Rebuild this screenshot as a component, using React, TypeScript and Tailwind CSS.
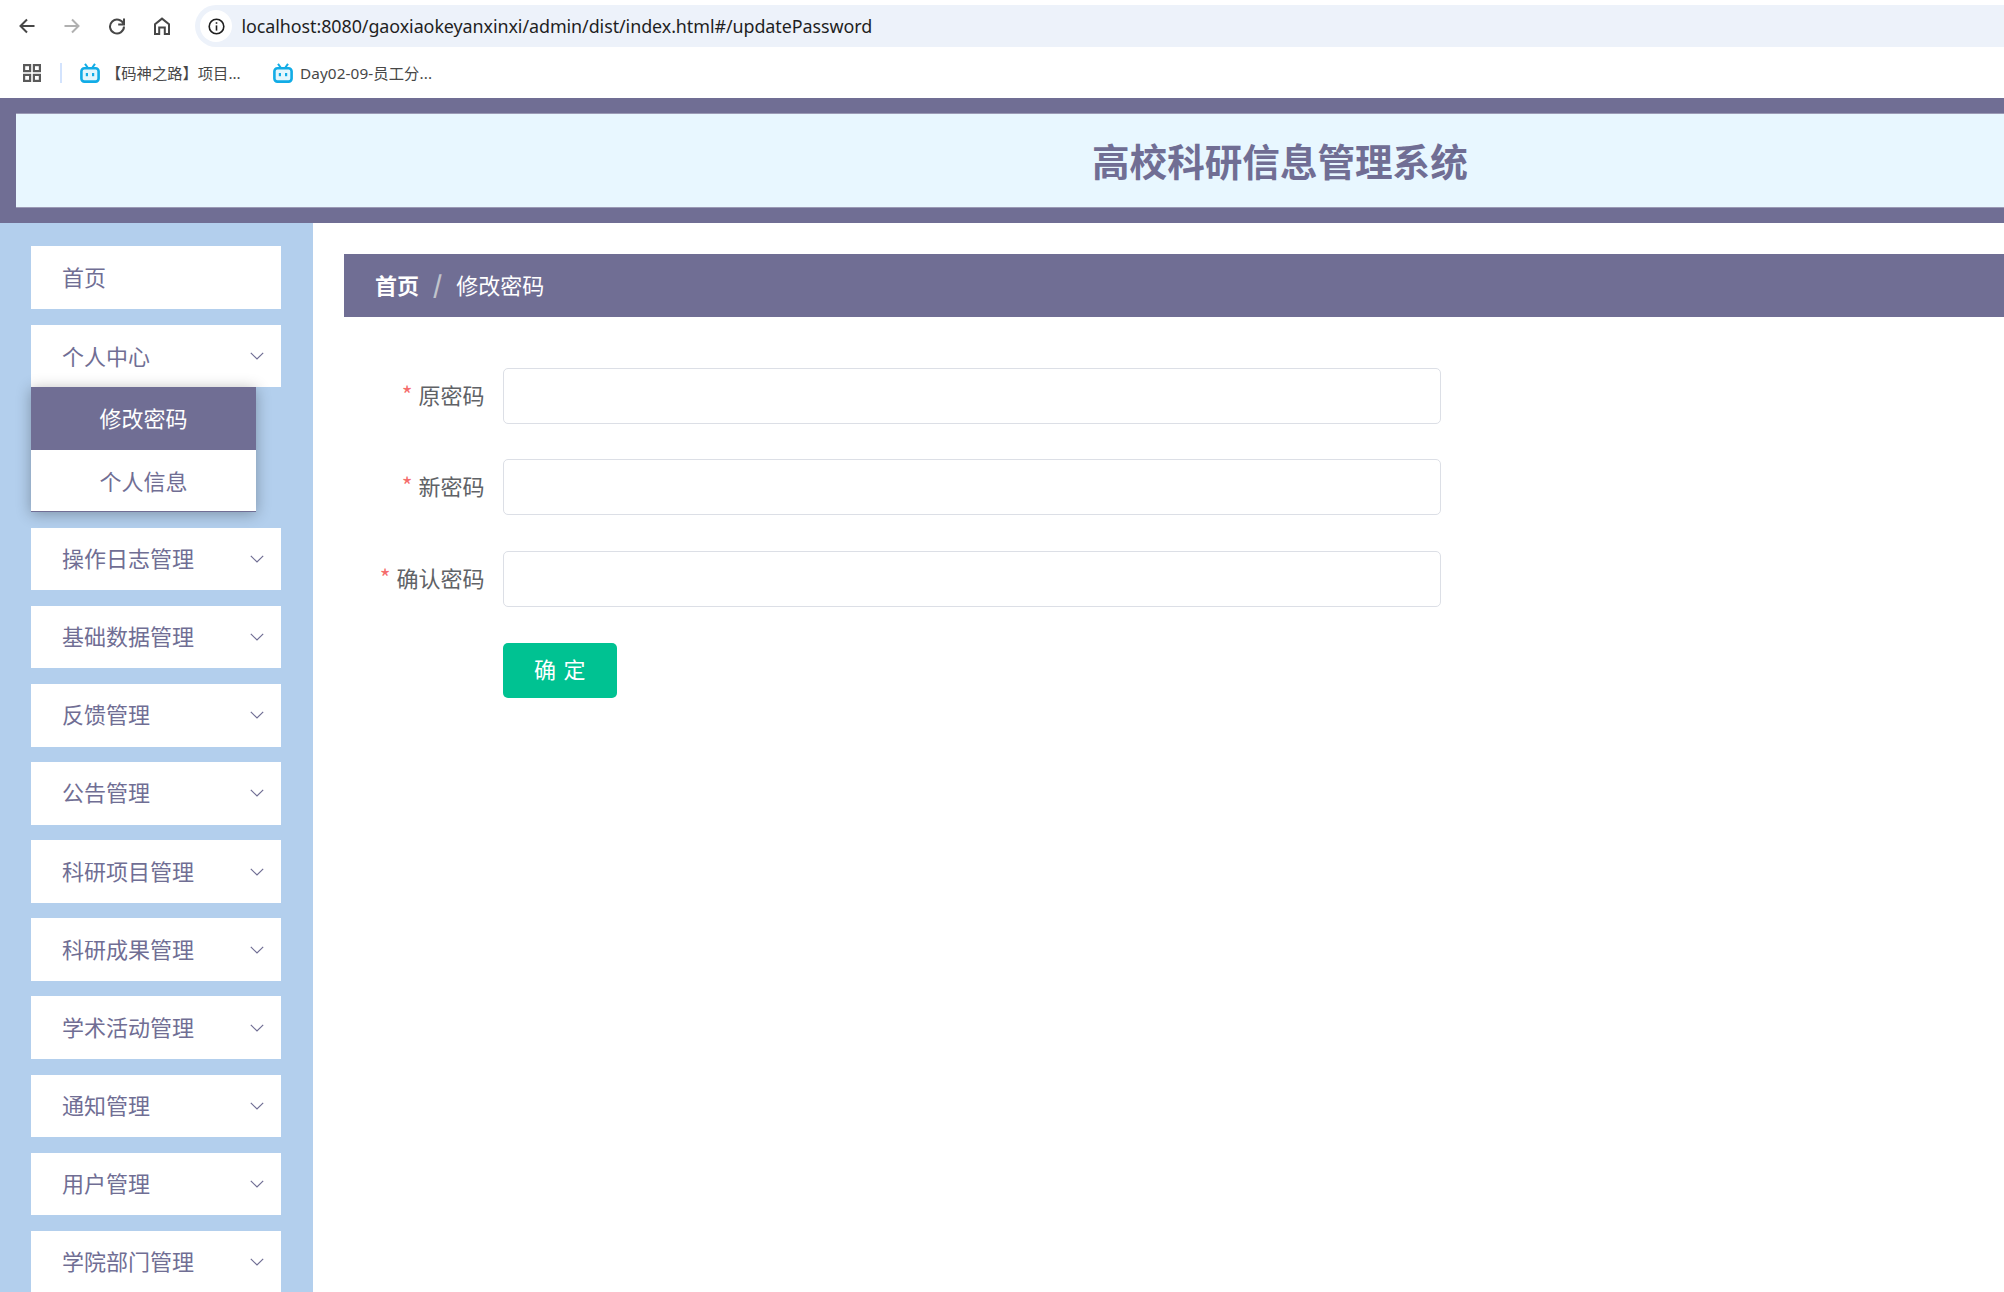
import React from "react";

const Chevron = () => (
  <svg width="14" height="8" viewBox="0 0 14 8" fill="none" stroke="#706e94" strokeWidth="1.2">
    <path d="M0.8 0.8 L7 7 L13.2 0.8" />
  </svg>
);

const Bili = () => (
  <svg width="20" height="20" viewBox="0 0 20 20" fill="none" className="shrink-0">
    <rect x="1.4" y="5.2" width="17.2" height="13.4" rx="3" fill="#e3f6fd" stroke="#12ace6" strokeWidth="2.6" />
    <path d="M5 0.8 L8 5 M15 0.8 L12 5" stroke="#12ace6" strokeWidth="2" />
    <rect x="5.8" y="10" width="2.2" height="3.2" fill="#12ace6" />
    <rect x="12" y="10" width="2.2" height="3.2" fill="#12ace6" />
  </svg>
);

const navItems = ["操作日志管理", "基础数据管理", "反馈管理", "公告管理", "科研项目管理", "科研成果管理", "学术活动管理", "通知管理", "用户管理", "学院部门管理"];

const fields = [
  { label: "原密码", mb: "mb-[35px]" },
  { label: "新密码", mb: "mb-[36px]" },
  { label: "确认密码", mb: "mb-[36px]" },
];

export default function App() {
  return (
    <div className="h-screen w-full overflow-hidden bg-white font-['Noto_Sans_CJK_SC',sans-serif]">
      {/* browser chrome */}
      <div className="h-[98px] bg-white font-['Noto_Sans','Noto_Sans_CJK_SC',sans-serif]">
        <div className="flex h-[47px] items-end pl-[4.5px]">
          <div className="flex h-[42px] w-[2200px] shrink-0 items-center">
            <div className="flex w-[45px] justify-center">
              <svg width="18" height="18" viewBox="0 0 18 18" fill="none" stroke="#474747" strokeWidth="2">
                <path d="M16.5 9 H2.5 M9 2.5 L2.5 9 L9 15.5" />
              </svg>
            </div>
            <div className="flex w-[45px] justify-center">
              <svg width="18" height="18" viewBox="0 0 18 18" fill="none" stroke="#b0b0b0" strokeWidth="2">
                <path d="M1.5 9 H15.5 M9 2.5 L15.5 9 L9 15.5" />
              </svg>
            </div>
            <div className="flex w-[45px] justify-center">
              <svg width="18" height="18" viewBox="0 0 18 18" fill="none" stroke="#474747" strokeWidth="2">
                <path d="M15.6 7.2 A7 7 0 1 0 16 9.6" />
                <path d="M16 1.6 V7.4 H10.2" />
              </svg>
            </div>
            <div className="flex w-[45px] justify-center">
              <svg width="18" height="18" viewBox="0 0 18 18" fill="none" stroke="#474747" strokeWidth="2">
                <path d="M2 17 V7.2 L9 1.6 L16 7.2 V17 H11.8 V10.6 H6.2 V17 Z" />
              </svg>
            </div>
            <div className="ml-[10.5px] flex h-[42px] flex-1 items-center rounded-full bg-[#edf2fa] pl-[5px]">
              <div className="flex h-[32px] w-[32px] items-center justify-center rounded-full bg-white">
                <svg width="17" height="17" viewBox="0 0 17 17" fill="none" stroke="#1f1f1f" strokeWidth="1.6">
                  <circle cx="8.5" cy="8.5" r="7.3" />
                  <path d="M8.5 7.4 V12.6" />
                  <path d="M8.5 4.2 V5.8" />
                </svg>
              </div>
              <span className="mt-[1px] ml-[9.5px] text-[17.9px] leading-none tracking-[-0.07px] text-[#1f1f1f]">localhost:8080/gaoxiaokeyanxinxi/admin/dist/index.html#/updatePassword</span>
            </div>
          </div>
        </div>
        <div className="flex h-[51px] items-center pl-[23px] text-[15.3px] text-[#474747]">
          <svg width="18" height="18" viewBox="0 0 18 18" fill="none" stroke="#5a5a5a" strokeWidth="2.2" className="shrink-0">
            <rect x="1.1" y="1.1" width="6" height="6" />
            <rect x="10.9" y="1.1" width="6" height="6" />
            <rect x="1.1" y="10.9" width="6" height="6" />
            <rect x="10.9" y="10.9" width="6" height="6" />
          </svg>
          <div className="ml-[19px] h-[20px] w-[2px] bg-[#d3e3fd]" />
          <div className="ml-[18px] flex items-center">
            <Bili />
            <span className="mt-[1px] ml-[6px] w-[167px] whitespace-nowrap">【码神之路】项目...</span>
          </div>
          <div className="flex items-center">
            <Bili />
            <span className="mt-[1px] ml-[7px] whitespace-nowrap tracking-[0.1px]">Day02-09-员工分...</span>
          </div>
        </div>
      </div>

      {/* system header */}
      <div className="h-[125px] bg-[#706e94] py-[15px] pl-[16px]">
        <div className="flex h-[95px] items-center border-y border-[#9b9ab5] bg-[#e8f7ff] pl-[1076px]">
          <span className="text-[37.6px] font-bold whitespace-nowrap text-[#706e94]">高校科研信息管理系统</span>
        </div>
      </div>

      <div className="flex h-[1069px]">
        {/* sidebar */}
        <aside className="w-[313px] shrink-0 overflow-hidden bg-[#b3cfed] pt-[23px] pl-[31px] text-[22px] text-[#706e94]">
          <div className="mb-[16px] flex h-[63px] w-[250px] items-center bg-white pb-[3px] pl-[31px]">首页</div>
          <div className="flex h-[62px] w-[250px] items-center justify-between bg-white pr-[17px] pl-[31px]">
            <span className="mb-[2px]">个人中心</span>
            <Chevron />
          </div>
          <div className="relative mb-[16px] w-[225px] bg-white shadow-[0_2px_14px_rgba(0,0,0,0.3)]">
            <div className="flex h-[63px] items-center justify-center bg-[#706e94] pb-[3px] text-white">修改密码</div>
            <div className="flex h-[62px] items-center justify-center border-b border-[#706e94] pb-[1px]">个人信息</div>
          </div>
          {navItems.map((n) => (
            <div key={n} className="mb-[15.7px] flex h-[62.4px] w-[250px] items-center justify-between bg-white pr-[17px] pl-[31px]">
              <span className="mb-[3px]">{n}</span>
              <Chevron />
            </div>
          ))}
        </aside>

        {/* main */}
        <main className="flex-1 pt-[31px] pl-[31px]">
          <div className="flex h-[63px] items-center bg-[#706e94] pb-[3px] pl-[31px] text-[22px] text-white">
            <span className="font-bold">首页</span>
            <span className="mx-[14px] text-[24px] leading-none font-bold text-[#c0c4cc]">/</span>
            <span>修改密码</span>
          </div>
          <form className="pt-[51px]">
            {fields.map((f) => (
              <div key={f.label} className={`flex h-[56px] items-center ${f.mb}`}>
                <label className="mb-[4px] w-[140.5px] text-right text-[22px] whitespace-nowrap text-[#606266]">
                  <span className="mr-[6px] text-[23px] leading-none text-[#f56c6c]">*</span>
                  {f.label}
                </label>
                <div className="ml-[18.5px] h-[56px] w-[938px] rounded-[5px] border border-[#dcdfe6] bg-white" />
              </div>
            ))}
            <button type="button" className="ml-[159px] flex h-[55px] w-[114px] items-center justify-center rounded-[5px] bg-[#00c292] pb-[4px] pl-[1px] text-[22px] tracking-[1.3px] text-white">
              确 定
            </button>
          </form>
        </main>
      </div>
    </div>
  );
}
